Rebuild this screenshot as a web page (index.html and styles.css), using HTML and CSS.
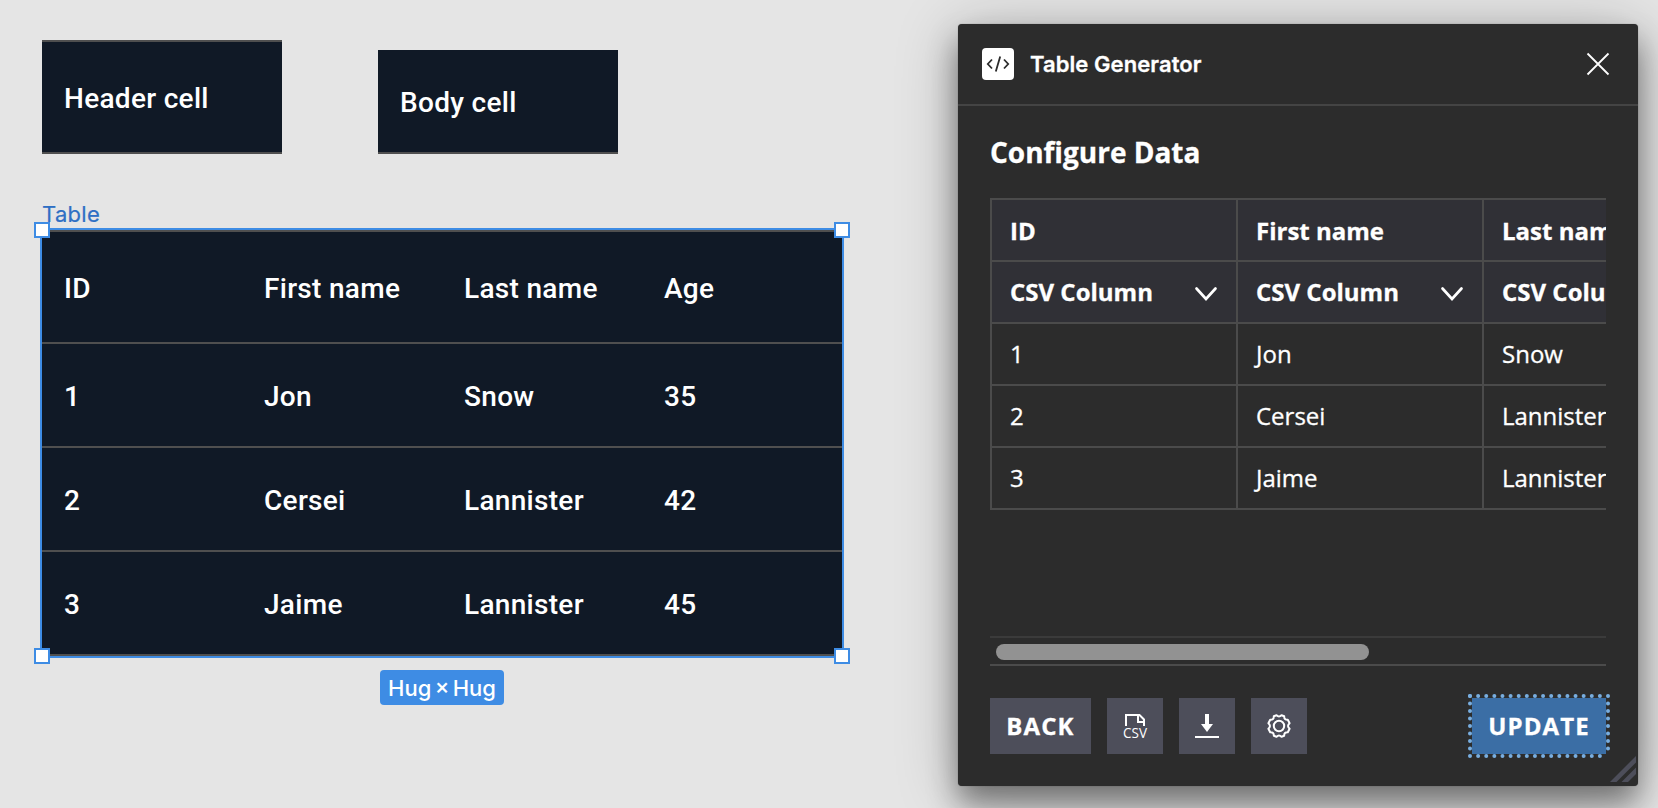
FILE: index.html
```html
<!DOCTYPE html>
<html lang="en">
<head>
<meta charset="utf-8">
<title>Table Generator</title>
<link rel="stylesheet" href="styles.css">
</head>
<body>
<main class="canvas">
  <div class="node node-header"><div class="cell cell-header cell-wide">Header cell</div></div>
  <div class="node node-body"><div class="cell cell-wide">Body cell</div></div>

  <section class="node node-table">
    <div class="frame-label">Table</div>
    <div class="grid">
      <div class="cell cell-header">ID</div><div class="cell cell-header">First name</div><div class="cell cell-header">Last name</div><div class="cell cell-header">Age</div>
      <div class="cell">1</div><div class="cell">Jon</div><div class="cell">Snow</div><div class="cell">35</div>
      <div class="cell">2</div><div class="cell">Cersei</div><div class="cell">Lannister</div><div class="cell">42</div>
      <div class="cell">3</div><div class="cell">Jaime</div><div class="cell">Lannister</div><div class="cell">45</div>
      <div class="selection">
        <i class="handle tl"></i><i class="handle tr"></i><i class="handle bl"></i><i class="handle br"></i>
      </div>
    </div>
    <div class="size-badge">Hug × Hug</div>
  </section>

  <section class="plugin">
    <header class="plugin-head">
      <svg class="logo" viewBox="0 0 32 32"><rect width="32" height="32" rx="4" fill="#fff"/><path d="M10 11.500 5.800 16l4.200 4.500M22 11.500l4.200 4.500-4.200 4.500M18.200 8.500l-4.400 15" fill="none" stroke="#2c2c2c" stroke-width="1.800"/></svg>
      <h1 class="plugin-title">Table Generator</h1>
      <svg class="close" viewBox="0 0 24 24"><path d="M1.500 1.500l21 21M22.500 1.500l-21 21" stroke="#fff" stroke-width="1.800" fill="none"/></svg>
    </header>
    <div class="plugin-body">
      <h2 class="heading">Configure Data</h2>
      <div class="scroller">
        <div class="data">
          <div class="th">ID</div><div class="th">First name</div><div class="th">Last name</div>
          <div class="th th-select">CSV Column<svg class="chev" viewBox="0 0 24 24"><path d="M2.500 6.500L12 17l9.500-10.500" /></svg></div>
          <div class="th th-select">CSV Column<svg class="chev" viewBox="0 0 24 24"><path d="M2.500 6.500L12 17l9.500-10.500" /></svg></div>
          <div class="th th-select">CSV Column</div>
          <div class="td">1</div><div class="td">Jon</div><div class="td">Snow</div>
          <div class="td">2</div><div class="td">Cersei</div><div class="td">Lannister</div>
          <div class="td">3</div><div class="td">Jaime</div><div class="td">Lannister</div>
        </div>
        <div class="track"><div class="thumb"></div></div>
      </div>
      <footer class="actions">
        <button class="btn btn-text btn-back">BACK</button>
        <button class="btn"><svg viewBox="0 0 24 24"><path d="M3 12V1h13.500L21 5.500V12M15 1v7h6" fill="none" stroke="#fff" stroke-width="2"/><text x="12" y="24" class="csv" textLength="24" lengthAdjust="spacingAndGlyphs">CSV</text></svg></button>
        <button class="btn"><svg viewBox="0 0 24 24"><path d="M10 0h4v10h4l-6 8-6-8h4zM0 22h24v2H0z" fill="#fff"/></svg></button>
        <button class="btn"><svg viewBox="0 0 24 24"><g fill="none" stroke="#fff" stroke-width="2"><circle cx="12" cy="12" r="5.200"/><path class="gear" d="M9.500 1.200Q12 4 14.500 1.200L17.200 2.300Q17 6 20.800 5.800L22.600 9.200Q19.500 12 22.600 14.800L20.800 18.200Q17 18 17.200 21.700L14.500 22.800Q12 20 9.500 22.800L6.800 21.700Q7 18 3.200 18.200L1.400 14.800Q4.500 12 1.400 9.200L3.200 5.800Q7 6 6.800 2.300Z"/></g></svg></button>
        <button class="btn btn-text btn-update">UPDATE<svg class="dots" viewBox="0 0 142 64"><path d="M2 2H140M2 62H140" stroke-dasharray="0 8.118"/><path d="M2 2V62M140 2V62" stroke-dasharray="0 7.500"/></svg></button>
      </footer>
    </div>
    <svg class="resizer" viewBox="0 0 26 26"><path d="M0 26L26 0v6.500L6.500 26zM11.500 26L26 11.500V18L18 26z" fill="#4d4e5a"/></svg>
  </section>
</main>
</body>
</html>
```

FILE: styles.css
```css
* { box-sizing: border-box; }
body { margin: 0; }
.canvas { position: relative; width: 1658px; height: 808px; overflow: hidden; background: #e5e5e5; }

/* design canvas */
.node { position: absolute; }
.node-header { left: 42px; top: 40px; }
.node-body { left: 378px; top: 50px; }
.node-table { left: 42px; top: 200px; width: 800px; display: flex; flex-direction: column; align-items: center; }
.cell { height: 104px; padding: 37px 22px 0; background: #101926; border-bottom: 2px solid #4f4f4f; color: #fff; font: 500 28px/32px Roboto, sans-serif; letter-spacing: .3px; white-space: nowrap; }
.cell-header { height: 114px; border-top: 2px solid #4f4f4f; padding-top: 41px; }
.cell-wide { width: 240px; }
.frame-label { align-self: flex-start; height: 30px; font: 400 22px/28px Inter, sans-serif; letter-spacing: .3px; color: #2e6fc4; -webkit-text-stroke: .2px; }
.grid { position: relative; width: 800px; display: grid; grid-template-columns: repeat(4, 200px); }
.selection { position: absolute; inset: -2px; border: 2px solid #3e8ce4; }
.handle { position: absolute; width: 16px; height: 16px; background: #fff; border: 2px solid #3e8ce4; }
.tl { left: -8px; top: -8px; }
.tr { right: -8px; top: -8px; }
.bl { left: -8px; bottom: -8px; }
.br { right: -8px; bottom: -8px; }
.size-badge { margin-top: 14px; width: 124px; height: 35px; border-radius: 4px; background: #3e8ce4; color: #fff; font: 500 22px/36px Inter, sans-serif; word-spacing: -2.500px; text-align: center; white-space: nowrap; }

/* plugin window */
.plugin { position: absolute; left: 958px; top: 24px; width: 680px; height: 762px; border-radius: 4px; background: #2c2c2c; color: #fff; box-shadow: 0 18px 30px rgba(0,0,0,.42), 0 6px 64px rgba(0,0,0,.24), 0 0 1px rgba(0,0,0,.5); }
.plugin-head { height: 82px; border-bottom: 2px solid #444; padding: 0 28px 0 24px; display: flex; align-items: center; }
.logo { width: 32px; height: 32px; }
.plugin-title { flex: 1; margin: 0 0 0 16px; font: 600 22px/32px Inter, sans-serif; letter-spacing: .08px; -webkit-text-stroke: .3px; }
.close { width: 24px; height: 24px; }
.plugin-body { padding: 24px 32px 0; font-family: "Open Sans", sans-serif; -webkit-text-stroke: .3px; }
.heading { margin: 0; height: 68px; font-size: 28px; line-height: 44px; font-weight: 700; }
.scroller { height: 468px; overflow: hidden; border-bottom: 2px solid #4b4b4b; display: flex; flex-direction: column; justify-content: space-between; }
.data { width: 740px; display: grid; grid-template-columns: repeat(3, 246px); grid-auto-rows: 62px; border-top: 2px solid #4b4b4b; border-left: 2px solid #4b4b4b; }
.th, .td { display: flex; justify-content: space-between; padding: 0 18px; border-right: 2px solid #4b4b4b; border-bottom: 2px solid #4b4b4b; font-size: 24px; line-height: 59px; white-space: nowrap; }
.th { background: #303036; font-weight: 700; line-height: 61px; }
.th-select { line-height: 59px; }
.chev { width: 24px; height: 24px; margin-top: 20px; fill: none; stroke: #fff; stroke-width: 2.700; stroke-linecap: round; }
.track { height: 28px; border-top: 2px solid #3b3b3b; padding: 6px 0 0 6px; }
.thumb { width: 373px; height: 16px; border-radius: 8px; background: #929292; }
.actions { margin-top: 32px; display: flex; gap: 16px; }
.btn { display: grid; place-items: center; width: 56px; height: 56px; padding: 0; border: 0; background: #4d4e5a; color: #fff; }
.btn > svg { width: 24px; height: 24px; overflow: visible; }
.btn-text { font: 700 24px/56px "Open Sans", sans-serif; letter-spacing: 1.100px; place-items: start center; -webkit-text-stroke: .3px; }
.btn-back { width: 101px; }
.btn-update { position: relative; width: 134px; margin-left: auto; background: #3b6ea5; }
.btn > .dots { position: absolute; left: -4px; top: -4px; width: 142px; height: 64px; fill: none; stroke: #78aee0; stroke-width: 4; stroke-linecap: round; }
.csv { font: 400 15px "Open Sans", sans-serif; fill: #fff; text-anchor: middle; }
.gear { stroke-linejoin: round; }
.resizer { position: absolute; right: 2px; bottom: 4px; width: 26px; height: 26px; }
```
